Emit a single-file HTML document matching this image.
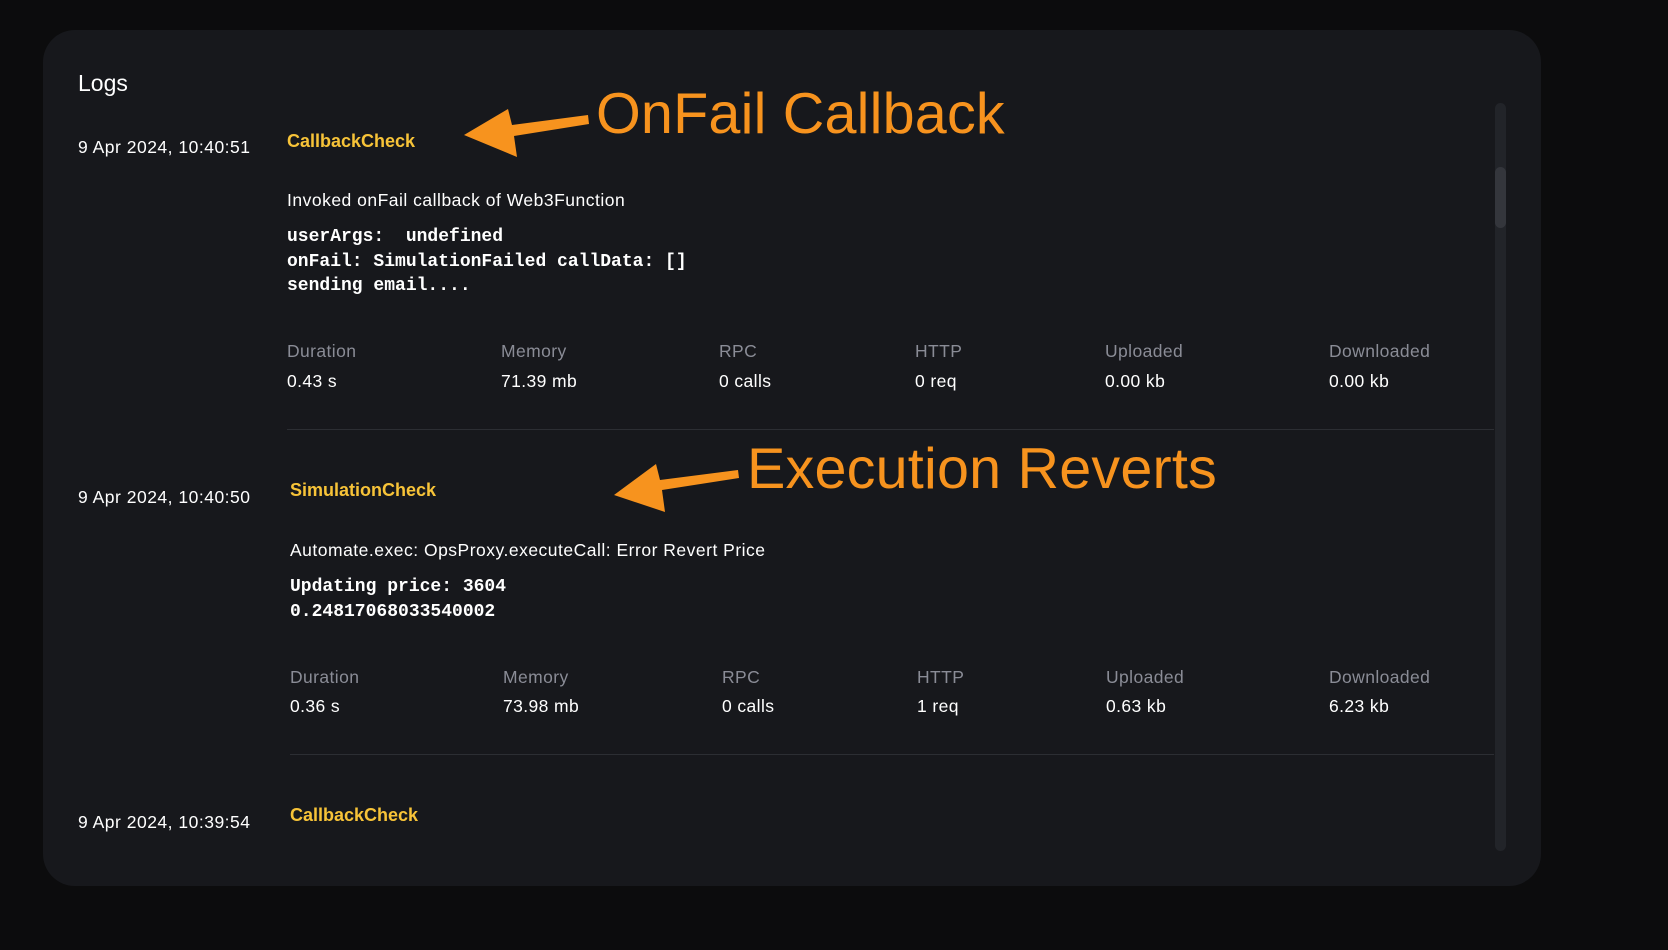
<!DOCTYPE html>
<html><head><meta charset="utf-8"><style>
html,body{margin:0;padding:0;background:#0c0c0d;width:1668px;height:950px;overflow:hidden;font-family:"Liberation Sans",sans-serif;}
.card{position:absolute;left:43px;top:30px;width:1498px;height:856px;background:#17181c;border-radius:32px;}
.t{position:absolute;white-space:nowrap;color:#fff;line-height:1;}
.d{font-size:17.5px;letter-spacing:0.5px;}
.y{color:#f7c338;font-weight:bold;font-size:18px;}
.m{font-family:"Liberation Mono","DejaVu Sans Mono",monospace;font-weight:bold;font-size:18px;line-height:24.5px;}
.l{color:#8a8c96;font-size:17.5px;letter-spacing:0.4px;}
.v{font-size:17.5px;letter-spacing:0.4px;}
.o{color:#f7931e;font-size:57.5px;letter-spacing:0.2px;}
.hr{position:absolute;height:1px;background:#2c2e33;left:287px;width:1207px;}
</style></head><body>
<div class="card"></div>
<div style="position:absolute;left:1495px;top:103px;width:11px;height:748px;border-radius:6px;background:#222429"></div>
<div style="position:absolute;left:1495px;top:167px;width:11px;height:61px;border-radius:6px;background:#34363c"></div>

<div class="t" style="left:78px;top:72px;font-size:23px">Logs</div>

<div class="t d" style="left:78px;top:139px">9 Apr 2024, 10:40:51</div>
<div class="t y" style="left:287px;top:132px">CallbackCheck</div>
<div class="t d" style="left:287px;top:192px">Invoked onFail callback of Web3Function</div>
<div class="t m" style="left:287px;top:225px">userArgs:&nbsp; undefined<br>onFail: SimulationFailed callData: []<br>sending email....</div>
<div class="t l" style="left:287px;top:343px">Duration</div><div class="t v" style="left:287px;top:373px">0.43 s</div>
<div class="t l" style="left:501px;top:343px">Memory</div><div class="t v" style="left:501px;top:373px">71.39 mb</div>
<div class="t l" style="left:719px;top:343px">RPC</div><div class="t v" style="left:719px;top:373px">0 calls</div>
<div class="t l" style="left:915px;top:343px">HTTP</div><div class="t v" style="left:915px;top:373px">0 req</div>
<div class="t l" style="left:1105px;top:343px">Uploaded</div><div class="t v" style="left:1105px;top:373px">0.00 kb</div>
<div class="t l" style="left:1329px;top:343px">Downloaded</div><div class="t v" style="left:1329px;top:373px">0.00 kb</div>
<div class="hr" style="top:429px"></div>

<div class="t d" style="left:78px;top:489px">9 Apr 2024, 10:40:50</div>
<div class="t y" style="left:290px;top:481px">SimulationCheck</div>
<div class="t d" style="left:290px;top:542px">Automate.exec: OpsProxy.executeCall: Error Revert Price</div>
<div class="t m" style="left:290px;top:575px">Updating price: 3604<br>0.24817068033540002</div>
<div class="t l" style="left:290px;top:669px">Duration</div><div class="t v" style="left:290px;top:698px">0.36 s</div>
<div class="t l" style="left:503px;top:669px">Memory</div><div class="t v" style="left:503px;top:698px">73.98 mb</div>
<div class="t l" style="left:722px;top:669px">RPC</div><div class="t v" style="left:722px;top:698px">0 calls</div>
<div class="t l" style="left:917px;top:669px">HTTP</div><div class="t v" style="left:917px;top:698px">1 req</div>
<div class="t l" style="left:1106px;top:669px">Uploaded</div><div class="t v" style="left:1106px;top:698px">0.63 kb</div>
<div class="t l" style="left:1329px;top:669px">Downloaded</div><div class="t v" style="left:1329px;top:698px">6.23 kb</div>
<div class="hr" style="top:754px;left:290px;width:1204px"></div>

<div class="t d" style="left:78px;top:814px">9 Apr 2024, 10:39:54</div>
<div class="t y" style="left:290px;top:806px">CallbackCheck</div>

<svg style="position:absolute;left:0;top:0" width="1668" height="950">
<polygon fill="#f7931e" points="464,135 508,109 512,125 588,115 589,124 514,136 517,157"/>
<polygon fill="#f7931e" points="614,495 656,464 660,480 738,470 739,478 662,490 665,512"/>
</svg>
<div class="t o" style="left:596px;top:86px">OnFail Callback</div>
<div class="t o" style="left:747px;top:441px">Execution Reverts</div>
</body></html>
